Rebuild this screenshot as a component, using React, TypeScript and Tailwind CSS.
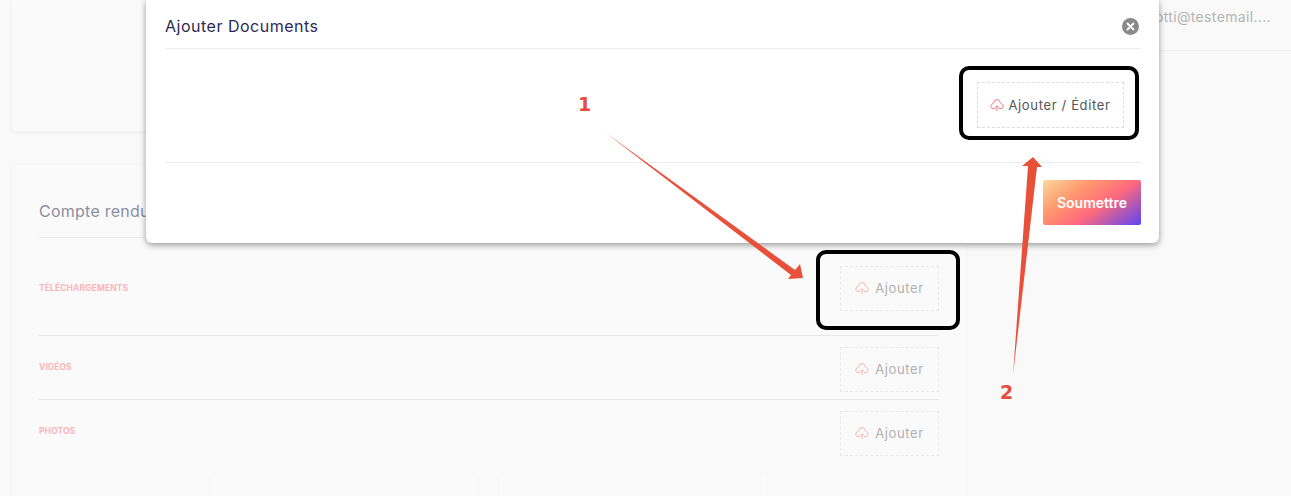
import React from 'react';

const font = "font-['Inter','Liberation_Sans',sans-serif]";

// nuage a trois bosses avec la fleche d'upload
function CloudIcon({ className }: { className?: string }) {
  return (
    <svg viewBox="0 0 14 14" fill="none" stroke="currentColor" strokeWidth="1" className={className}>
      <path d="M5 10.6H3a2.3 2.3 0 0 1-.6-4.5 1.9 1.9 0 0 1 1.4-1.4A3.2 3.2 0 0 1 10.2 4.8a1.9 1.9 0 0 1 1.4 1.3A2.3 2.3 0 0 1 11 10.6H9" strokeLinejoin="round" />
      <path d="M7 12.8V8M5.4 9.5 7 7.9l1.6 1.6" strokeLinecap="round" strokeLinejoin="round" />
    </svg>
  );
}

function UploadButton({ label }: { label: string }) {
  return (
    <div className="flex h-[45px] w-[99px] items-center justify-center gap-[6px] border border-dashed border-[#ebebeb] text-[#b0b0b0]">
      <CloudIcon className="-mt-[1px] h-[14px] w-[14px] text-[#fdb4b4]" />
      <span className="pt-[1px] text-[13px] font-normal tracking-[0.65px]">{label}</span>
    </div>
  );
}

function Row({ title, tall, last }: { title: string; tall?: boolean; last?: boolean }) {
  return (
    <div className={`flex justify-between ${last ? '' : 'border-b border-[#e8e8e8]'} ${tall ? 'h-[98px] pt-[28px]' : 'h-[64px] pt-[11px]'}`}>
      <span className={`text-[8.5px] font-bold tracking-[0.1px] text-[#fdb4b9] ${tall ? 'mt-[16px]' : 'mt-[14px]'}`}>{title}</span>
      <UploadButton label="Ajouter" />
    </div>
  );
}

export default function App() {
  return (
    <div className={`relative h-[496px] w-[1291px] overflow-hidden bg-[#f9f9f9] ${font}`}>
      {/* fond de page */}
      <div className="flex h-[131px]">
        <div className="ml-[12px] h-[131px] w-[954px] rounded-b bg-[#fafafa] shadow-[0_1px_4px_rgba(0,0,0,0.06)]" />
        <div className="ml-auto flex h-[51px] w-[160px] justify-end whitespace-nowrap border-b border-[#f0f0f0] pr-[20px] pt-[6px] text-[14px] tracking-[0.35px] text-[#b4b4b4]">
          otti@testemail....
        </div>
      </div>
      <div className="ml-[12px] mt-[34px] h-[340px] w-[954px] rounded bg-[#fafafa] px-[27px] pt-[34px] shadow-[0_0_3px_rgba(0,0,0,0.05)]">
        <div className="h-[39px] border-b border-[#ededed] text-[16px] tracking-[0.25px] text-[#8c8f9f]">Compte rendu</div>
        <Row title="TÉLÉCHARGEMENTS" tall />
        <Row title="VIDÉOS" />
        <Row title="PHOTOS" last />
        <div className="mt-[9px] flex">
          <div className="ml-[171px] h-[40px] w-[268px] rounded-t bg-[#fafafa] shadow-[0_0_3px_rgba(0,0,0,0.04)]" />
          <div className="ml-[21px] h-[40px] w-[268px] rounded-t bg-[#fafafa] shadow-[0_0_3px_rgba(0,0,0,0.04)]" />
        </div>
      </div>

      {/* modale */}
      <div className="absolute left-[146px] top-0 h-[243px] w-[1013px] rounded-b-md bg-white pl-[19px] pr-[18px] shadow-[0_2px_6px_rgba(0,0,0,0.4)]">
        <div className="flex h-[49px] items-center justify-between border-b border-[#eeeeee] pt-[4px]">
          <span className="text-[16px] font-normal tracking-[0.5px] text-[#2c2a55]">Ajouter Documents</span>
          <svg viewBox="0 0 16 16" className="mr-[2px] h-[17px] w-[17px]">
            <circle cx="8" cy="8" r="8" fill="#8a8a8a" />
            <path d="M5.2 5.2l5.6 5.6M10.8 5.2l-5.6 5.6" stroke="#fff" strokeWidth="1.8" strokeLinecap="round" />
          </svg>
        </div>
        <div className="flex h-[114px] items-start justify-end border-b border-[#ebebeb] pr-[17px] pt-[33px]">
          <div className="flex h-[46px] w-[147px] items-center justify-center gap-[4px] border border-dashed border-[#dddddd] text-[#555555]">
            <CloudIcon className="-mt-[1px] h-[14px] w-[14px] text-[#f77f86]" />
            <span className="pt-[1px] text-[13px] font-normal tracking-[0.65px]">Ajouter / Éditer</span>
          </div>
        </div>
        <div className="flex justify-end pt-[17px]">
          <div className="flex h-[45px] w-[98px] items-center justify-center rounded-[2px] bg-[linear-gradient(145deg,#fbd89c_0%,#ff9a6e_30%,#ff6a7c_58%,#5b45f5_100%)] text-[14px] font-semibold text-white">
            Soumettre
          </div>
        </div>
      </div>

      {/* annotations du tutoriel */}
      <div className="absolute left-[959px] top-[66px] h-[74px] w-[180px] rounded-[10px] border-[4px] border-black" />
      <div className="absolute left-[816px] top-[250px] h-[80px] w-[144px] rounded-[10px] border-[4px] border-black" />
      <span className="absolute left-[578px] top-[90px] font-['DejaVu_Sans',sans-serif] text-[19px] font-bold text-[#e74c3c]">1</span>
      <span className="absolute left-[1000px] top-[378px] font-['DejaVu_Sans',sans-serif] text-[19px] font-bold text-[#e74c3c]">2</span>
      <svg className="absolute left-0 top-0 h-[496px] w-[1291px]" viewBox="0 0 1291 496">
        <polygon fill="#e8503a" points="606,133 795,270 800,264 803,278 788,279 791,275" />
        <polygon fill="#e8503a" points="1013,375 1037,167 1042,167 1033,157 1022,166 1028,166" />
      </svg>
    </div>
  );
}
